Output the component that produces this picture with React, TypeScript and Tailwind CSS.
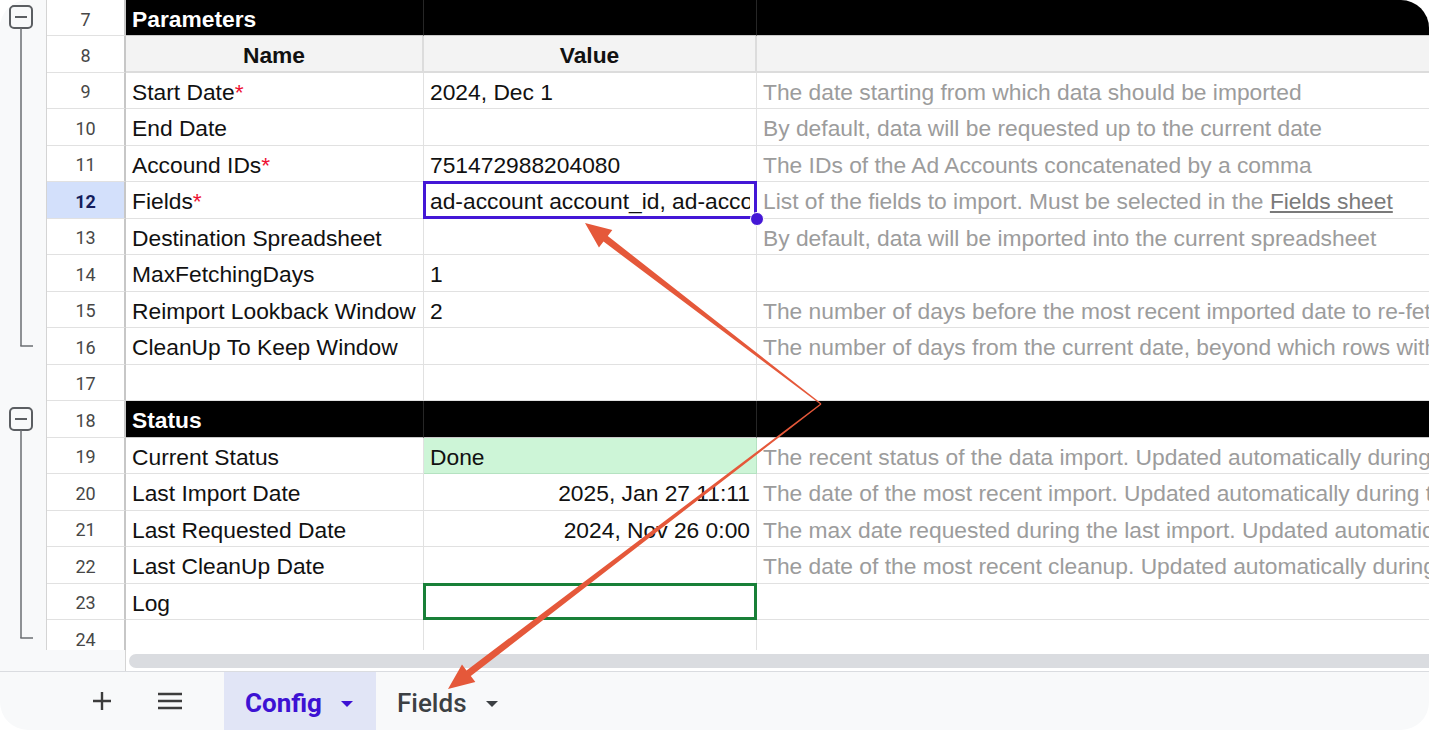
import React from "react";

type Row = {
    n: number;
    kind?: "section" | "head" | "blank";
    label?: string;
    name?: string;
    req?: boolean;
    value?: string;
    align?: "right";
    desc?: React.ReactNode;
    selected?: boolean;
    done?: boolean;
    log?: boolean;
};

const rows: Row[] = [
    { n: 8, kind: "head" },
    { n: 9, name: "Start Date", req: true, value: "2024, Dec 1", desc: "The date starting from which data should be imported" },
    { n: 10, name: "End Date", desc: "By default, data will be requested up to the current date" },
    { n: 11, name: "Accound IDs", req: true, value: "751472988204080", desc: "The IDs of the Ad Accounts concatenated by a comma" },
    {
        n: 12,
        name: "Fields",
        req: true,
        value: "ad-account account_id, ad-account name",
        selected: true,
        desc: (
            <span>
                List of the fields to import. Must be selected in the{" "}
                <span className="underline text-[#7a7a7a]">Fields sheet</span>
            </span>
        ),
    },
    { n: 13, name: "Destination Spreadsheet", desc: "By default, data will be imported into the current spreadsheet" },
    { n: 14, name: "MaxFetchingDays", value: "1" },
    { n: 15, name: "Reimport Lookback Window", value: "2", desc: "The number of days before the most recent imported date to re-fetch data" },
    { n: 16, name: "CleanUp To Keep Window", desc: "The number of days from the current date, beyond which rows with data are removed" },
    { n: 17, kind: "blank" },
    { n: 18, kind: "section", label: "Status" },
    { n: 19, name: "Current Status", value: "Done", done: true, desc: "The recent status of the data import. Updated automatically during import" },
    { n: 20, name: "Last Import Date", value: "2025, Jan 27 11:11", align: "right", desc: "The date of the most recent import. Updated automatically during the import" },
    { n: 21, name: "Last Requested Date", value: "2024, Nov 26 0:00", align: "right", desc: "The max date requested during the last import. Updated automatically" },
    { n: 22, name: "Last CleanUp Date", desc: "The date of the most recent cleanup. Updated automatically during cleanup" },
    { n: 23, name: "Log", log: true },
    { n: 24, kind: "blank" },
];

function RowHeader({ n, selected }: { n: number; selected?: boolean }) {
    return (
        <div
            className={
                "flex w-[79px] shrink-0 items-center justify-center border-b border-r-2 border-b-[#e1e1e1] border-r-[#c7c7c7] pt-[3px] font-['Roboto',sans-serif] text-[18px] " +
                (selected ? "bg-[#d3e0fb] font-bold text-[#141d5c]" : "bg-white text-[#474747]")
            }
        >
            {n}
        </div>
    );
}

function SectionRow({ n, label, first }: { n: number; label: string; first?: boolean }) {
    return (
        <div className={"flex shrink-0 " + (first ? "h-[36px]" : "h-[36.5px]")}>
            <RowHeader n={n} />
            <div className="flex w-[298px] shrink-0 items-center border-b border-r border-b-[#c9c9c9] border-r-[#262626] bg-black px-[6px] pt-[3px] font-bold text-white">
                {label}
            </div>
            <div className="w-[333px] shrink-0 border-b border-r border-b-[#c9c9c9] border-r-[#262626] bg-black" />
            <div className="flex-1 border-b border-b-[#c9c9c9] bg-black" />
        </div>
    );
}

function DataRow({ r }: { r: Row }) {
    if (r.kind === "head") {
        return (
            <div className="flex h-[36.5px] shrink-0">
                <RowHeader n={r.n} />
                <div className="flex w-[298px] shrink-0 items-center justify-center border-b-2 border-r-2 border-[#dcdcdc] bg-[#f3f3f3] pt-[3px] font-bold">
                    Name
                </div>
                <div className="flex w-[333px] shrink-0 items-center justify-center border-b-2 border-r-2 border-[#dcdcdc] bg-[#f3f3f3] pt-[3px] font-bold">
                    Value
                </div>
                <div className="flex-1 border-b-2 border-[#dcdcdc] bg-[#f3f3f3]" />
            </div>
        );
    }
    return (
        <div className="flex h-[36.5px] shrink-0">
            <RowHeader n={r.n} selected={r.selected} />
            <div className="flex w-[298px] shrink-0 items-center overflow-hidden whitespace-nowrap border-b border-r border-[#e1e1e1] bg-white px-[6px] pt-[3px]">
                {r.name}
                {r.req && <span className="text-[#ee1133]">*</span>}
            </div>
            <div
                className={
                    "relative flex w-[333px] shrink-0 items-center whitespace-nowrap border-b border-r px-[6px] pt-[3px] " +
                    (r.done ? "border-[#b5e2c1] bg-[#cdf5d7] " : "border-[#e1e1e1] bg-white ") +
                    (r.align === "right" ? "justify-end" : "")
                }
            >
                <span className="overflow-hidden">{r.value}</span>
                {r.selected && (
                    <>
                        <div className="absolute bottom-[-1px] left-[-1px] right-[-1px] top-[-1px] z-10 border-[3px] border-[#4417d6]" />
                        <div className="absolute bottom-[-8px] right-[-8px] z-10 h-[14px] w-[14px] rounded-full border border-white bg-[#4417d6]" />
                    </>
                )}
                {r.log && (
                    <div className="absolute bottom-[-1px] left-[-1px] right-[-1px] top-[-1px] z-10 border-[3px] border-[#188038]" />
                )}
            </div>
            <div className="flex flex-1 items-center overflow-hidden whitespace-nowrap border-b border-[#e1e1e1] bg-white px-[6px] pt-[3px] text-[#9c9c9c]">
                {r.desc}
            </div>
        </div>
    );
}

function Gutter() {
    return (
        <div className="w-[47px] shrink-0 border-r border-[#d4d4d4] bg-[#f8f9fa]">
            <svg width="46" height="650" viewBox="0 0 46 650">
                <rect x="10" y="6" width="22" height="22" rx="4" fill="#f8f9fa" stroke="#5b5e62" strokeWidth="2" />
                <line x1="15" y1="17" x2="27" y2="17" stroke="#5b5e62" strokeWidth="2" />
                <line x1="21" y1="28" x2="21" y2="346" stroke="#6b6e72" strokeWidth="1.5" />
                <line x1="20.3" y1="346" x2="33" y2="346" stroke="#6b6e72" strokeWidth="1.5" />
                <rect x="10" y="408" width="22" height="22" rx="4" fill="#f8f9fa" stroke="#5b5e62" strokeWidth="2" />
                <line x1="15" y1="419" x2="27" y2="419" stroke="#5b5e62" strokeWidth="2" />
                <line x1="21" y1="430" x2="21" y2="638" stroke="#6b6e72" strokeWidth="1.5" />
                <line x1="20.3" y1="638" x2="33" y2="638" stroke="#6b6e72" strokeWidth="1.5" />
            </svg>
        </div>
    );
}

function Caret({ color }: { color: string }) {
    return (
        <svg width="12" height="6" viewBox="0 0 12 6">
            <polygon points="0,0 12,0 6,6" fill={color} />
        </svg>
    );
}

function Arrows() {
    return (
        <svg className="pointer-events-none absolute left-0 top-0 z-20" width="1429" height="730" viewBox="0 0 1429 730">
            <polygon
                points="821.37,403.52 607.76,236.04 612.32,230.09 585,223 598.94,247.55 603.5,241.6 820.63,404.48"
                fill="#e5583a"
            />
            <polygon
                points="821.36,404.48 470.8,676.0 475.34,681.96 448,689 461.98,664.48 466.5,670.4 820.64,403.52"
                fill="#e5583a"
            />
        </svg>
    );
}

export default function App() {
    return (
        <div className="h-[730px] w-[1429px] overflow-hidden bg-white">
            <div className="relative flex h-full w-full flex-col overflow-hidden rounded-[28px] bg-[#f8f9fa] font-['Liberation_Sans',Arial,sans-serif] text-[22.8px] text-[#111]">
                <div className="flex h-[650px] shrink-0 overflow-hidden">
                    <Gutter />
                    <div className="flex flex-1 flex-col">
                        <SectionRow n={7} label="Parameters" first />
                        {rows.map((r) =>
                            r.kind === "section" ? (
                                <SectionRow key={r.n} n={r.n} label={r.label || ""} />
                            ) : r.kind === "blank" ? (
                                <DataRow key={r.n} r={{ n: r.n }} />
                            ) : (
                                <DataRow key={r.n} r={r} />
                            )
                        )}
                    </div>
                </div>

                <div className="flex h-[22px] shrink-0 border-b border-[#dadce0]">
                    <div className="w-[126px] shrink-0 border-r border-[#d4d4d4] bg-[#f8f9fa]" />
                    <div className="flex-1 bg-white pl-[3px] pt-[4px]">
                        <div className="h-[14px] w-full rounded-l-full bg-[#dadce0]" />
                    </div>
                </div>

                <div className="flex flex-1 items-stretch font-['Roboto',sans-serif] text-[26px]">
                    <div className="flex w-[224px] shrink-0 items-center pl-[82px]">
                        <div className="flex h-[40px] w-[40px] items-center justify-center">
                            <svg width="20" height="20" viewBox="0 0 20 20">
                                <path d="M10 1v18M1 10h18" stroke="#3c3c3c" strokeWidth="2.4" />
                            </svg>
                        </div>
                        <div className="ml-[28px] flex h-[40px] w-[40px] items-center justify-center">
                            <svg width="26" height="18" viewBox="0 0 26 18">
                                <path d="M1 2h24M1 9h24M1 16h24" stroke="#3c3c3c" strokeWidth="2.6" />
                            </svg>
                        </div>
                    </div>
                    <div className="flex w-[152px] shrink-0 items-center gap-[19px] bg-[#e1e5f6] pl-[21px] pt-[5px] font-bold text-[#3d12d3]">
                        <span>Config</span>
                        <Caret color="#3d12d3" />
                    </div>
                    <div className="flex items-center gap-[19px] pl-[21px] pt-[5px] font-medium text-[#3c4043]">
                        <span>Fields</span>
                        <Caret color="#3c4043" />
                    </div>
                </div>

                <Arrows />
            </div>
        </div>
    );
}
